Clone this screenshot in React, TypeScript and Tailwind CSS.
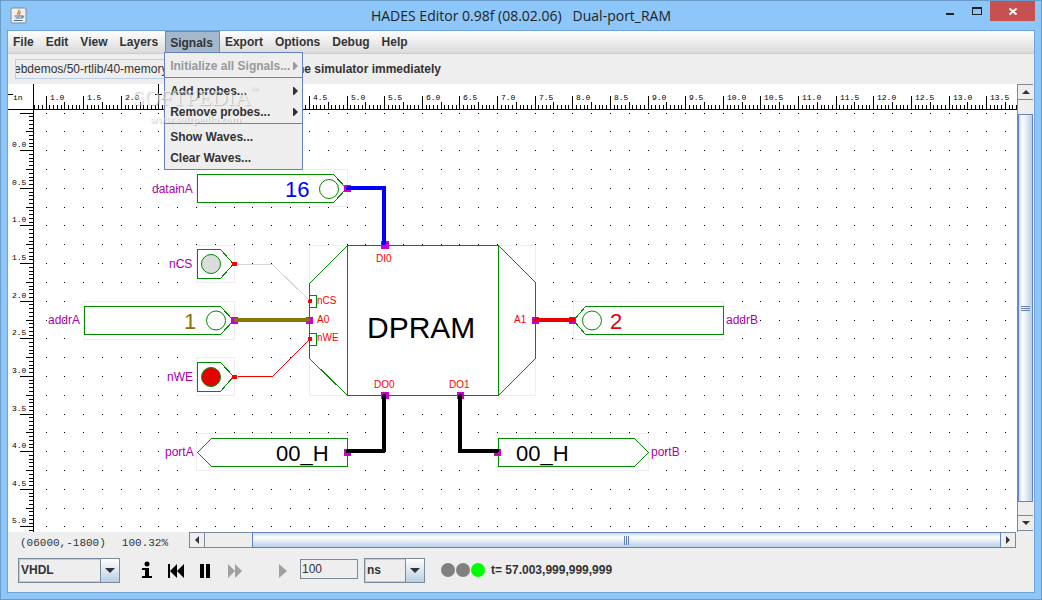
import { useState, type ReactNode } from "react";

const INCH = 75.25;
const GRID = INCH / 4;
const ORIGIN_X = 38;
const ORIGIN_Y = 66.7;

const GREEN = "#008b00";
const PIN = "#cc00cc";
const RED = "#e60000";

const MENUS = ["File", "Edit", "View", "Layers", "Signals", "Export", "Options", "Debug", "Help"];

const range = (n: number) => Array.from({ length: n }, (_, i) => i);

export default function App() {
  const [open, setOpen] = useState<string | null>("Signals");

  return (
    <div className="flex h-screen min-h-96 flex-col border border-[#6b9bc8] bg-[#8dc7f9] font-['Liberation_Sans',Arial,sans-serif] text-xs text-[#333]">
      <TitleBar />
      <main className="mx-[6px] mb-[6px] flex min-h-0 flex-1 flex-col border border-[#6fa4d6] bg-[#eee]">
        <nav className="flex h-[23px] shrink-0 border-b border-[#ccc] bg-gradient-to-b from-white to-[#dadada] font-bold">
          {MENUS.map((name) => (
            <div key={name} className="relative flex">
              <button
                type="button"
                onClick={() => setOpen(open === name ? null : name)}
                className={
                  open === name
                    ? "border border-b-0 border-[#7a8a99] bg-[#a3b8cc] pl-[4px] pr-[6px]"
                    : "pl-[5px] pr-[7px]"
                }
              >
                {name}
              </button>
              {open === name && name === "Signals" && <SignalsMenu />}
            </div>
          ))}
        </nav>

        <div className="flex h-[30px] shrink-0 items-center pl-[7px]">
          <input
            aria-label="Design file"
            defaultValue="ebdemos/50-rtlib/40-memory/dpram.hds"
            className="h-5 w-[200px] border border-[#b8cfe5] bg-[#eee] -indent-[2px]"
          />
          <span className="pl-12 font-bold">Stop the simulator immediately</span>
        </div>

        <div className="flex min-h-0 flex-1">
          <div className="min-w-0 flex-1 bg-white">
            <Schematic />
          </div>
          <VerticalScroll />
        </div>

        <StatusRow />
        <Controls />
      </main>
      <Watermark />
    </div>
  );
}

function TitleBar() {
  return (
    <header className="flex h-[29px] shrink-0 items-start">
      <div className="flex w-32 pl-[9px] pt-[6px]">
        <JavaIcon />
      </div>
      <h1 className="flex-1 whitespace-pre pt-[5px] text-center font-['Open_Sans',sans-serif] text-sm leading-5 text-[#222]">
        HADES Editor 0.98f (08.02.06)   Dual-port_RAM
      </h1>
      <div className="flex w-32 justify-end pr-[6px]">
        <button type="button" aria-label="Minimize" className="h-5 w-7">
          <svg width="28" height="20" shapeRendering="crispEdges">
            <path d="M12 12h8v2h-8z" fill="#222" />
          </svg>
        </button>
        <button type="button" aria-label="Maximize" className="h-5 w-7">
          <svg width="28" height="20" shapeRendering="crispEdges">
            <path d="M10 6h10v8H10zM11 8v5h8V8z" fill="#222" fillRule="evenodd" />
          </svg>
        </button>
        <button type="button" aria-label="Close" className="h-5 w-[45px] bg-[#c75050]">
          <svg width="45" height="20">
            <path d="M19.500 7.500l7 6M26.500 7.500l-7 6" stroke="#fff" strokeWidth="2" />
          </svg>
        </button>
      </div>
    </header>
  );
}

function JavaIcon() {
  return (
    <svg width="17" height="17" viewBox="0 0 17 17">
      <rect x="1" y="1" width="15" height="15" rx="1" fill="#eef0f1" stroke="#7f8a93" />
      <path d="M9 2.500c1 2-3 2.500-1 5.500M11 4.500c-2 1-2 2-1.500 3.500" stroke="#e07b1f" strokeWidth="1.300" fill="none" />
      <path d="M4.500 9h7M5.500 11h5M4 13.500h8.500M11.500 9c2.500-.5 2 2-.5 2" stroke="#47708f" strokeWidth="1.200" fill="none" />
    </svg>
  );
}

function SignalsMenu() {
  return (
    <div className="absolute -left-px top-[21px] z-10 w-[139px] border border-[#6382bf] bg-[#eee]">
      <div className="border-b border-[#6382bf] pb-px pt-[2px]">
        <MenuItem submenu disabled>Initialize all Signals...</MenuItem>
      </div>
      <div className="border-b border-[#6382bf] pb-px pt-[2px]">
        <MenuItem submenu>Add probes...</MenuItem>
        <MenuItem submenu>Remove probes...</MenuItem>
      </div>
      <div className="pb-px pt-[2px]">
        <MenuItem>Show Waves...</MenuItem>
        <MenuItem>Clear Waves...</MenuItem>
      </div>
    </div>
  );
}

function MenuItem({ children, submenu, disabled }: { children: ReactNode; submenu?: boolean; disabled?: boolean }) {
  return (
    <button
      type="button"
      disabled={disabled}
      className="flex h-[21px] w-full items-center justify-between whitespace-nowrap pl-[5px] pr-[4px] font-bold disabled:text-[#999]"
    >
      {children}
      {submenu && (
        <svg width="5" height="8" fill="currentColor" className="shrink-0">
          <path d="M0 0h1l4 4-4 4H0z" />
        </svg>
      )}
    </button>
  );
}

/* Rulers, grid and the circuit itself, in canvas pixels. */
function Schematic() {
  return (
    <svg className="block h-full w-full font-['Liberation_Sans',Arial,sans-serif]" shapeRendering="crispEdges">
      <Grid />
      <Circuit />
      <Rulers />
    </svg>
  );
}

function Grid() {
  const dots = range(50)
    .flatMap((row) => range(110).map((col) => `M${Math.floor(ORIGIN_X + col * GRID)} ${Math.floor(ORIGIN_Y + (row - 2) * GRID)}h1v1h-1z`))
    .join("");
  return <path d={dots} fill="#000" />;
}

function tickSize(i: number, sizes: [number, number, number]) {
  return i % 10 === 0 ? sizes[0] : i % 5 === 0 ? sizes[1] : sizes[2];
}

function Rulers() {
  const step = GRID / 5;
  const top = range(560)
    .map((n) => {
      const i = n - 3;
      const size = tickSize(i, [13, 7, 4]);
      return `M${Math.floor(ORIGIN_X + i * step)} ${25 - size}h1v${size}h-1z`;
    })
    .join("");
  const left = range(260)
    .map((n) => {
      const i = n - 10;
      const size = tickSize(i, [13, 7, 4]);
      return `M${25 - size} ${Math.floor(ORIGIN_Y + i * step)}h${size}v1h-${size}z`;
    })
    .join("");

  return (
    <g fontFamily="'Liberation Mono', monospace" fontSize="8">
      <path d="M0 25h4000v1H0zM25 0h1v2000h-1z" />
      <path d={top} />
      <path d={left} />
      <path d="M0 10h5v1H0zM150 0h1v25h-1zM147 10h7v1h-7z" />
      <text x="5" y="16">in</text>
      {range(26).map((n) => (
        <text key={n} x={Math.floor(ORIGIN_X + (n * INCH) / 2) + 4} y="16">
          {(1 + n / 2).toFixed(1)}
        </text>
      ))}
      {range(11).map((n) => (
        <text key={n} x="4" y={Math.floor(ORIGIN_Y + (n * INCH) / 2) - 3}>
          {(n / 2).toFixed(1)}
        </text>
      ))}
    </g>
  );
}

function Circuit() {
  return (
    <g fill="none" stroke={GREEN}>
      {/* bounding boxes */}
      <g fill="#fff" stroke="#eee">
        <path d="M188.500 85.500h151v37h-151zM188.500 161.500h38v37h-38zM75.500 217.500h151v38h-151zM188.500 273.500h38v38h-38z" />
        <path d="M301.500 161.500h226v150h-226zM565.500 217.500h150v38h-150zM188.500 349.500h151v37h-151zM489.500 349.500h151v37h-151z" />
      </g>

      {/* ports */}
      <path d="M189.500 90.500h136l13 14-13 14h-136z" />
      <path d="M189.500 165.500h23l13 14.500-13 14.500h-23z" />
      <path d="M76.500 222.500h136l13 14-13 14h-136z" />
      <path d="M189.500 278.500h23l13 14-13 15h-23z" />
      <path d="M715.500 222.500h-138l-12 14 12 14h138z" />
      <path d="M339.500 354.500h-136l-14 14 14 14h136z" />
      <path d="M490.500 354.500h136l14 14-14 14h-136z" />

      {/* RAM body */}
      <path d="M339.500 161.500h151v150h-151zM339.500 161.500l-38 38v75l38 37M490.500 161.500l37 37v76l-37 37" />
      <path d="M301.500 199.500v75M301.500 211.500h7v12h-7M301.500 249.500h7v12h-7" />

      <g shapeRendering="auto">
        <circle cx="321" cy="105" r="9.500" />
        <circle cx="208" cy="236.500" r="9.500" />
        <circle cx="584" cy="236.500" r="9.500" />
        <circle cx="203" cy="180" r="9.500" fill="#dcdcdc" />
        <circle cx="203" cy="293" r="9.500" fill={RED} />
      </g>

      {/* pins */}
      <g fill={PIN} stroke="none">
        <path d="M336 101h7v7h-7zM373 157h8v8h-8zM223 233h7v7h-7zM298 233h7v7h-7zM524 233h7v7h-7zM561 233h7v7h-7z" />
        <path d="M373 308h8v7h-8zM449 308h7v7h-7zM336 365h7v7h-7zM486 365h7v7h-7z" />
        <path d="M224 178h5v4h-5zM224 291h5v4h-5zM300 215h4v4h-4zM300 253h4v4h-4z" fill="#f00" />
      </g>

      {/* wires */}
      <g strokeLinecap="round" strokeLinejoin="round" strokeWidth="4">
        <path d="M340 104h36v55" stroke="#00f" />
        <path d="M228 236h72" stroke="#8b7300" />
        <path d="M528 236h37" stroke={RED} />
        <path d="M376 312v55h-36M452 312v55h37" stroke="#000" />
      </g>
      <path d="M229.500 180.500h35l37 36" stroke="#d8d8d8" />
      <path d="M229.500 292.500h35l37-37" stroke={RED} />

      <g stroke="none">
        <g fill="#a0a" fontSize="12">
          <text x="144" y="109">datainA</text>
          <text x="161" y="184">nCS</text>
          <text x="40" y="240">addrA</text>
          <text x="159" y="297">nWE</text>
          <text x="157" y="372">portA</text>
          <text x="643" y="372">portB</text>
          <text x="718" y="240">addrB</text>
        </g>
        <g fill="#f00" fontSize="10">
          <text x="368" y="178">DI0</text>
          <text x="309" y="220">nCS</text>
          <text x="309" y="239">A0</text>
          <text x="309" y="257">nWE</text>
          <text x="506" y="239">A1</text>
          <text x="366" y="304">DO0</text>
          <text x="441" y="304">DO1</text>
        </g>
        <g fontSize="22">
          <text x="277" y="113" fill="#00f">16</text>
          <text x="176" y="245" fill="#8b7300">1</text>
          <text x="602" y="245" fill={RED}>2</text>
          <text x="268" y="377" fill="#000">00_H</text>
          <text x="508" y="377" fill="#000">00_H</text>
        </g>
        <text x="359" y="254" fontSize="30" fill="#000">DPRAM</text>
      </g>
    </g>
  );
}

function VerticalScroll() {
  return (
    <div className="flex w-[17px] shrink-0 flex-col border-l border-[#7a8a99] pb-px pr-px">
      <button type="button" aria-label="Scroll up" className="flex h-4 shrink-0 items-center justify-center border-y border-[#7a8a99]">
        <svg width="8" height="4"><path d="M4 0l4 4H0z" fill="#333" /></svg>
      </button>
      <div className="h-[14px] shrink-0" />
      <div className="flex flex-1 flex-col items-center justify-center gap-px border border-[#6382bf] bg-gradient-to-r from-[#c8daec] via-white via-30% to-[#b8cfe5]">
        <span className="h-px w-[9px] bg-[#6382bf]" />
        <span className="h-px w-[9px] bg-[#6382bf]" />
        <span className="h-px w-[9px] bg-[#6382bf]" />
      </div>
      <div className="h-[13px] shrink-0" />
      <button type="button" aria-label="Scroll down" className="flex h-4 shrink-0 items-center justify-center border-y border-[#7a8a99]">
        <svg width="8" height="4"><path d="M0 0h8L4 4z" fill="#333" /></svg>
      </button>
    </div>
  );
}

function StatusRow() {
  return (
    <div className="flex h-4 shrink-0 pr-[18px]">
      <div className="flex w-[181px] shrink-0 gap-4 whitespace-pre pl-3 pt-[3px] font-['Liberation_Mono',monospace] text-[11px] leading-4">
        <span>(06000,-1800)</span>
        <span>100.32%</span>
      </div>
      <div className="flex flex-1 border border-[#7a8a99]">
        <button type="button" aria-label="Scroll left" className="flex w-[15px] items-center justify-center border-r border-[#7a8a99]">
          <svg width="4" height="8"><path d="M4 0v8L0 4z" fill="#333" /></svg>
        </button>
        <div className="w-[47px]" />
        <div className="-my-px flex flex-1 items-center justify-center gap-px border border-[#6382bf] bg-gradient-to-b from-[#c8daec] via-white via-30% to-[#b8cfe5]">
          <span className="h-[9px] w-px bg-[#6382bf]" />
          <span className="h-[9px] w-px bg-[#6382bf]" />
          <span className="h-[9px] w-px bg-[#6382bf]" />
        </div>
        <button type="button" aria-label="Scroll right" className="flex w-[14px] items-center justify-center">
          <svg width="4" height="8"><path d="M0 0l4 4-4 4z" fill="#333" /></svg>
        </button>
      </div>
    </div>
  );
}

function Combo({ label, value, options, className }: { label: string; value: string; options: string[]; className: string }) {
  return (
    <div className={`relative flex h-[25px] ${className}`}>
      <select
        aria-label={label}
        defaultValue={value}
        className="w-full appearance-none border border-[#7a8a99] bg-[#eee] pl-[2px] font-bold outline-1 -outline-offset-2 outline-[#b8cfe5]"
      >
        {options.map((option) => (
          <option key={option}>{option}</option>
        ))}
      </select>
      <span className="pointer-events-none absolute inset-y-0 right-0 flex w-5 items-center justify-center border border-[#7a8a99] bg-gradient-to-b from-white to-[#b8cfe5]">
        <svg width="10" height="5"><path d="M0 0h10L5 5z" fill="#333" /></svg>
      </span>
    </div>
  );
}

function Controls() {
  return (
    <div className="flex h-11 shrink-0 items-center pl-[10px]">
      <Combo label="Model" value="VHDL" options={["VHDL", "Java"]} className="w-[102px]" />
      <div className="flex pl-[12px]">
        <IconButton label="Info">
          <path d="M10 13h7v8h3v2H10v-2h3v-6h-3z" />
          <circle cx="15" cy="9" r="2.500" />
        </IconButton>
        <IconButton label="Rewind">
          <path d="M6 9h2v14H6zM15 9v14l-7-7zM22 9v14l-7-7z" />
        </IconButton>
        <IconButton label="Pause">
          <path d="M8 9h4v14H8zM14 9h4v14h-4z" />
        </IconButton>
        <IconButton label="Run" disabled>
          <path d="M6 9l7 7-7 7zM13 9l7 7-7 7z" />
        </IconButton>
      </div>
      <div className="flex pl-[18px]">
        <IconButton label="Step" disabled>
          <path d="M9 9l8 7-8 7z" />
        </IconButton>
      </div>
      <input aria-label="Time step" defaultValue="100" className="mb-[3px] h-5 w-[58px] border border-[#7a8a99] bg-[#eee] pl-px" />
      <Combo label="Time unit" value="ns" options={["ns", "ps", "ms"]} className="ml-[6px] w-[61px]" />
      <svg width="46" height="16" className="ml-4">
        <circle cx="7" cy="8" r="7" fill="#808080" />
        <circle cx="22" cy="8" r="7" fill="#808080" />
        <circle cx="37" cy="8" r="7" fill="#0f0" />
      </svg>
      <output className="pl-1 font-bold">t= 57.003,999,999,999</output>
    </div>
  );
}

function IconButton({ label, disabled, children }: { label: string; disabled?: boolean; children: ReactNode }) {
  return (
    <button type="button" aria-label={label} disabled={disabled} className="text-black disabled:text-[#a0a0a0]">
      <svg width="30" height="30" fill="currentColor">
        {children}
      </svg>
    </button>
  );
}

function Watermark() {
  return (
    <div className="pointer-events-none absolute left-[132px] top-[86px] z-20 text-center font-['Liberation_Serif',serif] leading-none text-[#f4f4f4] opacity-60 text-shadow-[1px_1px_1px_#999]">
      <p className="flex text-[22px] leading-6">
        SOFTPEDIA<span className="text-[8px] leading-2">™</span>
      </p>
      <p className="pt-1 text-[11px] font-bold">www.softpedia.com</p>
    </div>
  );
}
